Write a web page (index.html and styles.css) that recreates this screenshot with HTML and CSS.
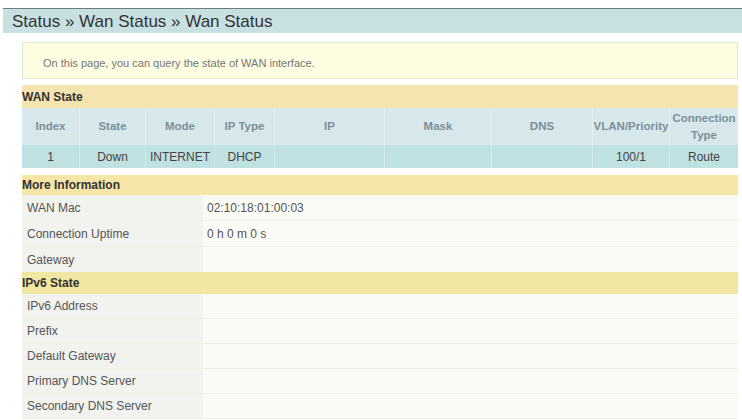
FILE: index.html
```html
<!DOCTYPE html>
<html>
<head>
<meta charset="utf-8">
<link rel="stylesheet" href="styles.css">
</head>
<body>
<div class="title">Status » Wan Status » Wan Status</div>
<div class="main">
  <div class="info">On this page, you can query the state of WAN interface.</div>

  <div class="section sec-wan">WAN State</div>
  <table class="wan">
    <thead>
      <tr>
        <th class="c-index">Index</th>
        <th class="c-state">State</th>
        <th class="c-mode">Mode</th>
        <th class="c-type">IP Type</th>
        <th class="c-ip">IP</th>
        <th class="c-mask">Mask</th>
        <th class="c-dns">DNS</th>
        <th class="c-vlan">VLAN/Priority</th>
        <th class="c-conn">Connection<br>Type</th>
      </tr>
    </thead>
    <tbody>
      <tr>
        <td>1</td>
        <td>Down</td>
        <td>INTERNET</td>
        <td>DHCP</td>
        <td></td>
        <td></td>
        <td></td>
        <td>100/1</td>
        <td>Route</td>
      </tr>
    </tbody>
  </table>

  <div class="section sec-more">More Information</div>
  <div class="kv">
    <div class="row tall"><div class="label">WAN Mac</div><div class="value">02:10:18:01:00:03</div></div>
    <div class="row tall"><div class="label">Connection Uptime</div><div class="value">0 h 0 m 0 s</div></div>
    <div class="row mid"><div class="label">Gateway</div><div class="value"></div></div>
  </div>

  <div class="section sec-ipv6">IPv6 State</div>
  <div class="kv">
    <div class="row"><div class="label">IPv6 Address</div><div class="value"></div></div>
    <div class="row"><div class="label">Prefix</div><div class="value"></div></div>
    <div class="row"><div class="label">Default Gateway</div><div class="value"></div></div>
    <div class="row"><div class="label">Primary DNS Server</div><div class="value"></div></div>
    <div class="row"><div class="label">Secondary DNS Server</div><div class="value"></div></div>
  </div>
</div>
</body>
</html>
```
FILE: styles.css
```css
html, body {
  margin: 0;
  padding: 0;
  background: #ffffff;
}
body {
  font-family: "Liberation Sans", Arial, sans-serif;
  color: #444;
}
.title {
  margin: 8px 0 0 3px;
  border-top: 1px solid #6e7f82;
  background: #c9e0e3;
  height: 24px;
  line-height: 25px;
  padding-left: 9px;
  font-size: 17px;
  color: #333;
}
.main {
  padding: 9px 4px 0 22px;
}
.info {
  height: 27px;
  padding: 0 0 8px 20px;
  border: 1px solid #e4e4d2;
  background: #fdfde2;
  font-size: 11px;
  line-height: 13px;
  display: flex;
  align-items: flex-end;
  color: #777;
}
.section {
  font-weight: bold;
  font-size: 12px;
  color: #333;
  display: flex;
  align-items: center;
}
.sec-wan {
  margin-top: 6px;
  height: 23px;
  background: #f4e4b0;
}
.sec-more {
  margin-top: 7px;
  height: 20px;
  background: #f5e6a8;
}
.sec-ipv6 {
  height: 22px;
  background: #f0e8a2;
}
.wan {
  width: 716px;
  border-collapse: collapse;
  table-layout: fixed;
}
.wan th, .wan td {
  padding: 0;
  text-align: center;
  white-space: nowrap;
  border-left: 1px solid rgba(255, 255, 255, 0.3);
}
.wan th:first-child, .wan td:first-child {
  border-left: none;
}
.wan thead tr {
  background: #d7e8ed;
  height: 37px;
}
.wan th {
  font-size: 11.5px;
  font-weight: bold;
  color: #7d8e98;
  line-height: 17px;
}
.wan tbody tr {
  background: #bfe1e1;
  height: 23px;
}
.wan td {
  font-size: 12px;
  color: #444;
}
.c-index { width: 57px; }
.c-state { width: 65px; }
.c-mode { width: 68px; }
.c-type { width: 59px; }
.c-ip { width: 109px; }
.c-mask { width: 106px; }
.c-dns { width: 100px; }
.c-vlan { width: 76px; }
.kv {
  display: flex;
  flex-direction: column;
}
.row {
  display: flex;
  height: 25px;
  border-bottom: 1px solid #efefe3;
  box-sizing: border-box;
}
.row.tall { height: 26px; }
.row.mid { height: 25px; border-bottom: none; }
.label {
  width: 181px;
  flex: none;
  background: #f2f2ef;
  padding-left: 5px;
  box-sizing: border-box;
  font-size: 12px;
  color: #555;
  display: flex;
  align-items: center;
}
.value {
  flex: 1;
  background: #fbfbf6;
  padding-left: 4px;
  font-size: 12px;
  color: #555;
  display: flex;
  align-items: center;
}
```
